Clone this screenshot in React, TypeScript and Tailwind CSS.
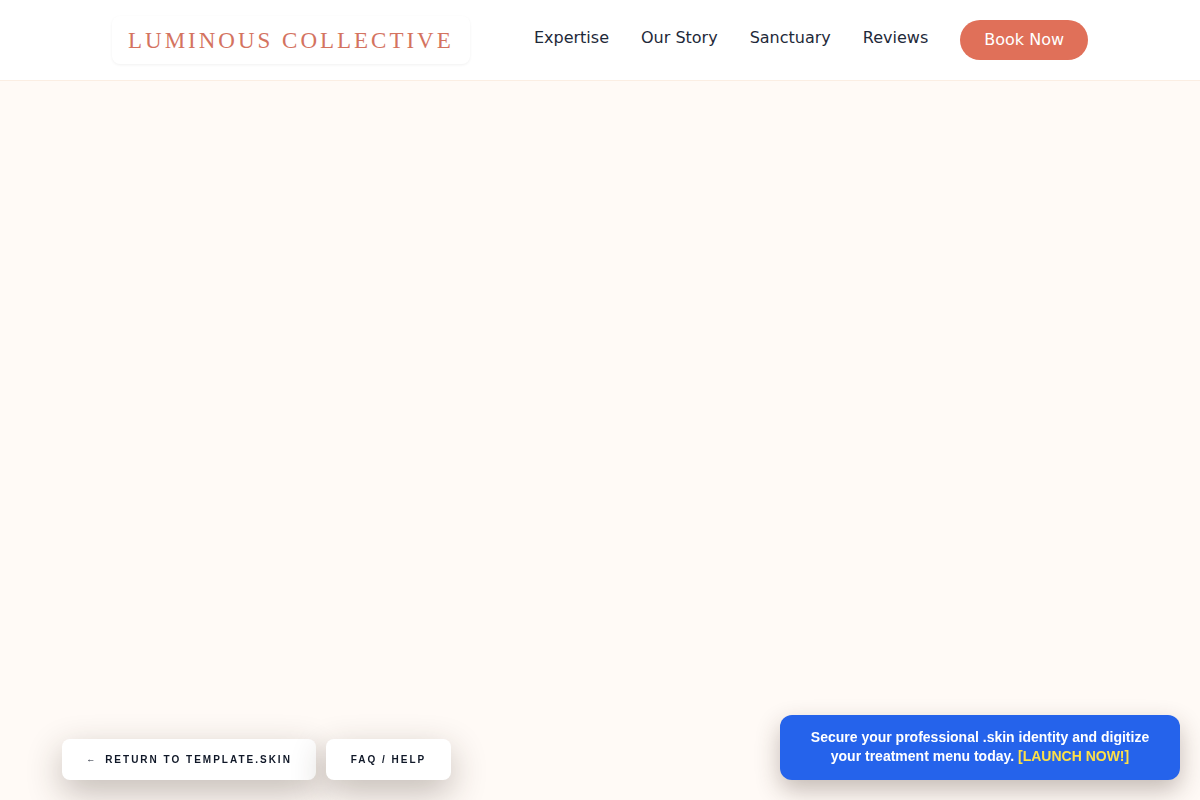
import React from 'react';

const navLinks = ['Expertise', 'Our Story', 'Sanctuary', 'Reviews'];

export default function App() {
    return (
        <div className="min-h-screen bg-[#fffaf6]" style={{ fontFamily: '"DejaVu Sans", sans-serif' }}>
            <header className="h-[81px] bg-white border-b border-[#fbeee3]">
                <div className="max-w-5xl mx-auto px-6 h-full flex items-center justify-between">
                    <a className="h-12 px-4 pt-0.5 flex items-center rounded-lg bg-white shadow-[0_1px_3px_rgba(0,0,0,0.06)]">
                        <span className="text-[23px] tracking-[0.13em] text-[#d4735f]" style={{ fontFamily: '"Liberation Serif", serif' }}>
                            LUMINOUS COLLECTIVE
                        </span>
                    </a>
                    <nav className="flex items-center gap-8">
                        {navLinks.map((l) => (
                            <a key={l} className="text-base text-gray-800 mb-1">{l}</a>
                        ))}
                        <button className="h-10 px-6 rounded-full bg-[#e07059] text-white text-base">Book Now</button>
                    </nav>
                </div>
            </header>

            <main className="h-[719px]" />

            {/* floating links, bottom left */}
            <div className="fixed bottom-5 left-[62px] flex gap-2.5" style={{ fontFamily: '"Liberation Sans", Arial, sans-serif' }}>
                <a className="h-[41px] w-[254px] flex items-center justify-center rounded-lg bg-white shadow-[0_12px_35px_rgba(50,35,25,0.3)] text-[10px] font-bold tracking-[0.2em] text-gray-900">
                    <span className="mr-2 text-[9px] font-normal">←</span>RETURN TO TEMPLATE.SKIN
                </a>
                <a className="h-[41px] w-[125px] flex items-center justify-center rounded-lg bg-white shadow-[0_12px_35px_rgba(50,35,25,0.3)] text-[10px] font-bold tracking-[0.2em] text-gray-900">
                    FAQ / HELP
                </a>
            </div>

            {/* launch banner */}
            <div className="fixed bottom-5 right-5 w-[400px] rounded-xl bg-[#2563eb] px-6 pt-[13px] pb-3.5 text-center text-sm font-bold leading-[19px] text-white shadow-[0_10px_25px_rgba(60,40,30,0.3)]" style={{ fontFamily: '"Liberation Sans", Arial, sans-serif' }}>
                <p>
                    Secure your professional .skin identity and digitize your treatment menu today.{' '}
                    <span className="text-[#fde047]">[LAUNCH NOW!]</span>
                </p>
            </div>
        </div>
    );
}
